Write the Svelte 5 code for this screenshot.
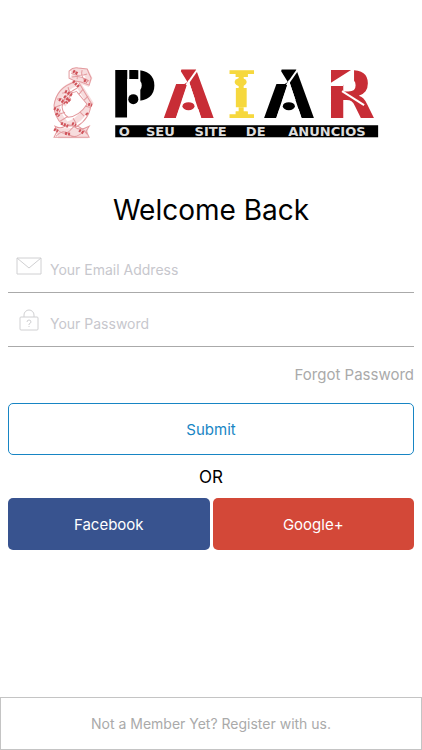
<script>
  let email = $state('');
  let password = $state('');

  const tagline = [
    { word: 'O', x: 73 },
    { word: 'SEU', x: 109 },
    { word: 'SITE', x: 159 },
    { word: 'DE', x: 204 },
    { word: 'ANUNCIOS', x: 275 },
  ];

  /**
   * @param {SubmitEvent} event
   */
  function handleSubmit(event) {
    event.preventDefault();
  }
</script>

{#snippet stencilA(x, color)}
  <g transform="translate({x} 0)" class={color}>
    <text x="0" y="53">A</text>
    <path class="gap" d="M12 54L25 15l13 39zM9 4h7l8 13-3 2H9z" />
    <path class="cut" d="M35 3L23 20" />
    <ellipse cx="25" cy="41" rx="6" ry="4" />
  </g>
{/snippet}

<main class="page">
  <svg class="logo" viewBox="0 -10 328 86" role="img" aria-label="PAIAR, O seu site de anuncios">
    <!-- thinker figure -->
    <g class="figure">
      <path class="wash" d="M20 7q7-3 15 0l3 6-2 5-8-3-8-4" />
      <path class="wash" d="M25 18Q6 25 6 42q1 9 8 16M14 60q15-3 25-22L27 19M18 28l-6 12M5 66h32M7 70h30" />
      <path d="M18 6q4-4 9-3l9 1q2 5 4 9l-2 7-8-3-6-1-6-3z" />
      <path d="M20 8q7 4 16 1M23 5q4 5 3 9M31 5q-2 6 4 12M21 12q8-2 17 4" />
      <path d="M24 17Q6 22 3 40q0 12 9 20l14 1q13-8 14-23L28 18" />
      <path d="M26 23Q12 30 11 42q1 7 6 10 11-1 19-13L26 27" />
      <path d="M17 22q1 8 9 4M11 28q7-2 8 4M6 34q7-2 7 3M4 42l8-3M5 50l9-3M9 56l8-5M32 24l-4 5M37 31l-4 4M39 42l-5-1M33 51l-4-4M25 58l-3-5" />
      <path d="M4 61q5 3 10 0t10 1 14-1l-3 5 3 6H3l3-6zM6 64q8 8 14 0t16 5M5 71q7-8 13-2t16-4" />
    </g>
    <g class="figure dots">
      <path d="M22 16l6 6M14 26l7 4M13 31l6 5M8 34l6 4M15 38l4-5M3 43l6 3M5 48l3 3M10 58l7 3M37 39l4 1M21 58l4 2M35 48l2 2M3 64l4 2M14 68l5 1M28 65l5 3M22 6l5 3M33 15l3 2" />
    </g>

    <!-- stencil wordmark -->
    <g class="wordmark">
      <text x="58" y="53">P</text>
      <path class="gap" d="M76 14h12v41H76z" />
      <path class="cut" d="M77 4v52M88 4v36" />
      <circle cx="82" cy="34" r="5" />

      {@render stencilA(112, 'red')}

      <g class="yellow">
        <text x="175" y="53">I</text>
        <path class="gap" d="M178 12h26v11h-26zM178 42h26v4h-26z" />
        <path class="gap" d="M178 12h6v34h-6zM195 12h6v34h-6z" />
        <ellipse cx="189" cy="17" rx="6" ry="4" />
        <path d="M187 11h5v12h-5zM187 42h5v5h-5z" />
      </g>

      {@render stencilA(212, '')}

      <g class="red">
        <text x="273" y="53">R</text>
        <path class="gap" d="M277 19l22-14h3v11l-11 4v1h-14z" />
        <path class="cut" d="M290 26l22 14" />
      </g>
    </g>

    <rect x="64" y="60" width="262" height="12" />
    <g class="tagline">
      {#each tagline as { word, x }}
        <text {x} y="71">{word}</text>
      {/each}
    </g>
  </svg>

  <h1>Welcome Back</h1>

  <form onsubmit={handleSubmit}>
    <label class="field">
      <svg width="26" height="24" viewBox="0 0 26 24" aria-hidden="true">
        <path d="M1 4h24v16H1zM1 4l12 10L25 4" />
      </svg>
      <input type="email" aria-label="Email" placeholder="Your Email Address" bind:value={email} />
    </label>
    <label class="field">
      <svg width="26" height="24" viewBox="0 0 26 24" aria-hidden="true">
        <rect x="4" y="9" width="18" height="13" rx="1" />
        <path d="M8 9V7a5 5 0 0 1 10 0v2M11 14q0-2 2-2t2 2q0 1-2 2v1M13 18v1" />
      </svg>
      <input type="password" aria-label="Password" placeholder="Your Password" bind:value={password} />
    </label>

    <a class="forgot" href="#forgot">Forgot Password</a>
    <button class="submit" type="submit">Submit</button>
  </form>

  <p class="or">OR</p>

  <div class="social">
    <button class="facebook" type="button">Facebook</button>
    <button class="google" type="button">Google+</button>
  </div>

  <a class="register" href="#register">Not a Member Yet? Register with us.</a>
</main>

<style>
  :global(body) {
    margin: 0;
    background: #fff;
  }

  .page {
    box-sizing: border-box;
    min-height: 100vh;
    padding-top: 55px;
    display: flex;
    flex-direction: column;
    font-family: Inter, 'Liberation Sans', sans-serif;
    font-size: 15px;
    color: #000;
  }

  .logo {
    width: 78%;
    margin-left: 12%;
  }

  .figure {
    fill: none;
    stroke: #e39a9e;
    stroke-width: 1;
  }

  .figure .wash {
    stroke: #f7dcdd;
    stroke-width: 6;
  }

  .dots {
    stroke: #d0545b;
    stroke-width: 3;
    stroke-dasharray: 2 1;
  }

  .wordmark {
    font-family: 'DejaVu Sans', sans-serif;
    font-size: 65px;
    font-weight: 700;
  }

  .red {
    fill: #c82d36;
  }

  .yellow {
    fill: #f6d83e;
    font-family: 'DejaVu Serif', serif;
  }

  .gap {
    fill: #fff;
  }

  .cut {
    fill: none;
    stroke: #fff;
    stroke-width: 2;
  }

  .tagline {
    font-family: 'DejaVu Sans', sans-serif;
    font-size: 13px;
    font-weight: 700;
    text-anchor: middle;
    fill: #ddd;
  }

  h1 {
    margin: 49px 8px 0;
    font-size: 28px;
    line-height: 40px;
    font-weight: 400;
    text-align: center;
  }

  form {
    display: flex;
    flex-direction: column;
    margin: 9px 8px 0;
  }

  .field {
    display: flex;
    align-items: center;
    gap: 8px;
    height: 53px;
    padding-left: 8px;
    border-bottom: 1px solid #aaa;
  }

  .field svg {
    flex: none;
    fill: none;
    stroke: #d0d0d2;
    stroke-width: 1;
  }

  input {
    flex: 1;
    min-width: 0;
    padding: 8px 0 0;
    border: 0;
    outline: 0;
    background: none;
    font: inherit;
    font-size: 14px;
  }

  input::placeholder {
    color: #c7c7cd;
    opacity: 1;
  }

  .forgot {
    align-self: flex-end;
    margin: 16px 0;
    line-height: 24px;
    color: #aaa;
    text-decoration: none;
  }

  button {
    height: 52px;
    border: 0;
    border-radius: 5px;
    font: inherit;
    color: #fff;
  }

  .submit {
    border: 1px solid #1785c4;
    background: #fff;
    color: #1785c4;
  }

  .or {
    margin: 10px 0 9px;
    font-size: 17px;
    line-height: 24px;
    text-align: center;
  }

  .social {
    display: flex;
    gap: 3px;
    margin: 0 8px 24px;
  }

  .social button {
    flex: 1;
  }

  .facebook {
    background: #38538f;
  }

  .google {
    background: #d34838;
  }

  .register {
    margin-top: auto;
    border: 1px solid #c4c4c4;
    font-size: 14px;
    line-height: 51px;
    text-align: center;
    text-decoration: none;
    color: #aaa;
  }
</style>
